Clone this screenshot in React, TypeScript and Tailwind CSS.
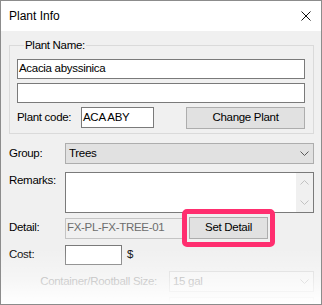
import React from "react";

const font = { fontFamily: '"Liberation Sans", Arial, sans-serif' };

const Chevron = ({ color = "#5a5a5a", up = false }: { color?: string; up?: boolean }) => (
  <svg width="9" height="5" viewBox="0 0 9 5" className={up ? "rotate-180" : ""}>
    <path d="M0.5 0.5 L4.5 4.5 L8.5 0.5" fill="none" stroke={color} strokeWidth="1" />
  </svg>
);

const Field = ({ className, children }: { className: string; children?: React.ReactNode }) => (
  <div className={`flex items-center border whitespace-nowrap overflow-hidden ${className}`}>{children}</div>
);

export default function App() {
  return (
    <div
      className="relative w-[322px] h-[305px] overflow-hidden border border-[#8c8c8c] bg-[#f0f0f0] text-black text-[11.5px] tracking-[-0.3px]"
      style={font}
    >
      {/* title bar */}
      <div className="flex h-[30px] items-center justify-between bg-white pl-[8px] pr-[10px]">
        <span className="text-[12px] tracking-normal">Plant Info</span>
        <svg width="10" height="10" viewBox="0 0 10 10">
          <path d="M0.5 0.5 L9.5 9.5 M9.5 0.5 L0.5 9.5" stroke="#111" strokeWidth="1" />
        </svg>
      </div>

      <div className="flex flex-col pl-[8px] pr-[7px] pt-[7px]">
        <fieldset className="border border-[#dadada] pl-[7px] pr-[8px] pt-[7px] pb-[4px]">
          <legend className="ml-[7px] px-[1px] leading-[14px]">Plant Name:</legend>
          <Field className="h-[20px] border-[#7a7a7a] bg-white pl-[1px]">Acacia abyssinica</Field>
          <Field className="mt-[4px] h-[20px] border-[#7a7a7a] bg-white" />
          <div className="mt-[4px] flex h-[22px] items-start">
            <span className="mt-[2px] w-[64px]">Plant code:</span>
            <Field className="h-[21px] w-[73px] border-[#7a7a7a] bg-white pl-[1px]">ACA ABY</Field>
            <div className="ml-auto flex h-[22px] w-[119px] items-center justify-center border border-[#adadad] bg-[#e1e1e1]">
              Change Plant
            </div>
          </div>
        </fieldset>

        <div className="mt-[9px] flex items-center">
          <span className="w-[56px]">Group:</span>
          <Field className="h-[21px] flex-1 justify-between border-[#adadad] bg-[#e1e1e1] pl-[3px] pr-[4px]">
            <span>Trees</span>
            <Chevron />
          </Field>
        </div>

        <div className="mt-[8px] flex items-start">
          <span className="w-[56px] leading-[16px]">Remarks:</span>
          <div className="flex h-[41px] flex-1 justify-end border border-[#7a7a7a] bg-white">
            <div className="flex w-[17px] flex-col items-center bg-[#f0f0f0] pt-[7px]">
              <Chevron color="#c2c2c2" up />
              <div className="mt-[15px]">
                <Chevron color="#c2c2c2" />
              </div>
            </div>
          </div>
        </div>

        <div className="mt-[4px] flex h-[22px] items-center">
          <span className="w-[56px]">Detail:</span>
          <Field className="h-[21px] w-[121px] border-[#c4c4c4] bg-[#f0f0f0] pl-[1px] text-[#6d6d6d]">
            FX-PL-FX-TREE-01
          </Field>
          <div className="relative ml-[3px] flex h-[22px] w-[79px] items-center justify-center border border-[#adadad] bg-[#e1e1e1]">
            Set Detail
            <div className="absolute -top-[9px] -bottom-[9px] -left-[8px] -right-[8px] rounded-[5px] border-[5px] border-[#ff2e6f]" />
          </div>
        </div>

        <div className="mt-[6px] flex items-center">
          <span className="w-[56px]">Cost:</span>
          <Field className="h-[20px] w-[57px] border-[#7a7a7a] bg-white" />
          <span className="ml-[5px]">$</span>
        </div>

        <div className="mt-[6px] flex items-center justify-end gap-[12px]">
          <span className="text-[#a3a3a3]">Container/Rootball Size:</span>
          <Field className="h-[21px] w-[145px] justify-between border-[#d9d9d9] bg-[#f4f4f4] pl-[3px] pr-[4px] text-[#a3a3a3]">
            <span>15 gal</span>
            <Chevron color="#c8c8c8" />
          </Field>
        </div>

        <div className="mt-[5px] flex justify-end">
          <Field className="h-[21px] w-[145px] border-[#d9d9d9] bg-[#f4f4f4]" />
        </div>
      </div>

      {/* screenshot fade at the bottom */}
      <div className="pointer-events-none absolute -left-[1px] -right-[1px] bottom-0 h-[56px] bg-linear-to-b from-white/0 via-white/35 to-white" />
    </div>
  );
}
